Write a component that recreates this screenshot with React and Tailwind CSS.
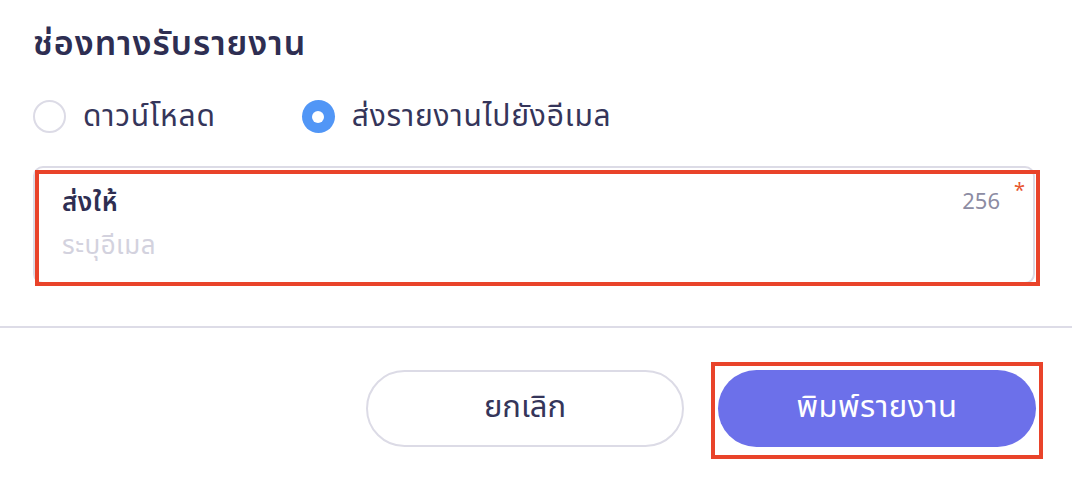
import React, { useState } from 'react';

const Radio = ({ checked, label, onClick }) => (
    <button type="button" onClick={onClick} className="flex items-center gap-[17px]">
        {checked ? (
            <span className="w-[33px] h-[33px] rounded-full bg-[#5196f6] flex items-center justify-center">
                <span className="w-[12px] h-[12px] rounded-full bg-white" />
            </span>
        ) : (
            <span className="w-[33px] h-[33px] rounded-full border-2 border-[#dcdbe6] bg-white" />
        )}
        <span className="text-[30px] leading-none tracking-[0.8px] text-[#35355a]">{label}</span>
    </button>
);

export default function App() {
    const [channel, setChannel] = useState('email');

    return (
        <div className="w-[1072px] h-[478px] bg-white overflow-hidden" style={{ fontFamily: '"Noto Sans Thai", "Noto Sans", "DejaVu Sans", sans-serif' }}>
            <div className="px-[33px] pt-[24px]">
                <h2 className="text-[34px] leading-[42px] font-semibold tracking-[1px] text-[#2e2e52]">ช่องทางรับรายงาน</h2>

                {/* Options */}
                <div className="flex items-center gap-[86px] mt-[34px]">
                    <Radio checked={channel === 'download'} label="ดาวน์โหลด" onClick={() => setChannel('download')} />
                    <Radio checked={channel === 'email'} label="ส่งรายงานไปยังอีเมล" onClick={() => setChannel('email')} />
                </div>

                {/* Email field */}
                <div className="relative mt-[33px] mr-[4px]">
                    <div className="border-2 border-[#dcdbe6] rounded-[10px] h-[118px] px-[27px] pt-[16px]">
                        <div className="flex items-start justify-between">
                            <span className="text-[26px] leading-[38px] font-semibold tracking-[0.5px] text-[#2e2e52]">ส่งให้</span>
                            <span className="text-[22px] leading-[38px] text-[#8c8ca3] mr-[6px]">256</span>
                        </div>
                        <input
                            className="w-full text-[26px] leading-[36px] mt-[6px] tracking-[0.5px] outline-none placeholder:text-[#d3d2de] text-[#2e2e52]"
                            placeholder="ระบุอีเมล"
                        />
                    </div>
                    <span className="absolute right-[10px] top-[15px] text-[20px] leading-none text-[#e8562f]">*</span>
                    <div className="absolute left-[2px] -right-[5px] top-[4px] h-[116px] border-4 border-[#e9432a] pointer-events-none" />
                </div>
            </div>

            <div className="h-[2px] bg-[#dddce7] mt-[42px]" />

            {/* Actions */}
            <div className="flex justify-end gap-[34px] pr-[36px] pt-[42px]">
                <button className="w-[318px] h-[77px] rounded-full border-2 border-[#dcdbe6] text-[31px] text-[#35355a]">ยกเลิก</button>
                <div className="relative">
                    <button className="w-[318px] h-[77px] rounded-full bg-[#6c70ea] text-[31px] tracking-[0.5px] text-white">พิมพ์รายงาน</button>
                    <div className="absolute -left-[7px] -right-[7px] -top-[8px] -bottom-[12px] border-4 border-[#e9432a] pointer-events-none" />
                </div>
            </div>
        </div>
    );
}
